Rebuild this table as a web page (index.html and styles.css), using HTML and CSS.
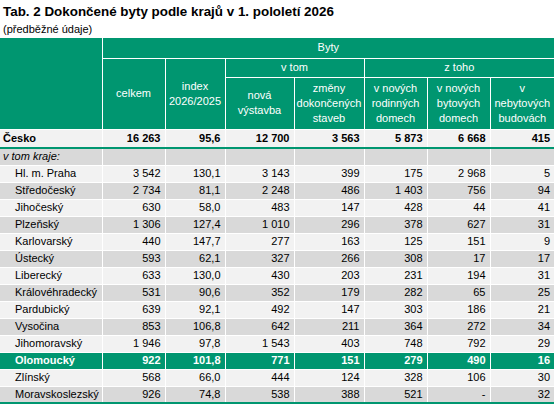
FILE: index.html
```html
<!DOCTYPE html>
<html lang="cs">
<head>
  <meta charset="UTF-8">
  <title>Dokončené byty podle krajů</title>
  <link rel="stylesheet" href="styles.css">
</head>
<body>
  <h1 class="title">Tab. 2 Dokončené byty podle krajů v 1. pololetí 2026</h1>
  <div class="subtitle">(předběžné údaje)</div>

  <table class="data">
    <colgroup>
      <col style="width:102px">
      <col style="width:63px">
      <col style="width:60px">
      <col style="width:69px">
      <col style="width:70px">
      <col style="width:63px">
      <col style="width:63px">
      <col style="width:64px">
    </colgroup>
    <thead>
      <tr class="h1">
        <th rowspan="3"></th>
        <th colspan="7">Byty</th>
      </tr>
      <tr class="h2">
        <th rowspan="2">celkem</th>
        <th rowspan="2">index<br>2026/2025</th>
        <th colspan="2">v tom</th>
        <th colspan="3">z toho</th>
      </tr>
      <tr class="h3">
        <th>nová<br>výstavba</th>
        <th>změny<br>dokončených<br>staveb</th>
        <th>v nových<br>rodinných<br>domech</th>
        <th>v nových<br>bytových<br>domech</th>
        <th>v<br>nebytových<br>budovách</th>
      </tr>
    </thead>
    <tbody>
      <tr class="total">
        <td class="name">Česko</td>
        <td>16 263</td><td>95,6</td><td>12 700</td><td>3 563</td><td>5 873</td><td>6 668</td><td>415</td>
      </tr>
      <tr class="dark">
        <td class="name note">v tom kraje:</td>
        <td></td><td></td><td></td><td></td><td></td><td></td><td></td>
      </tr>
      <tr class="light">
        <td class="name sub">Hl. m. Praha</td>
        <td>3 542</td><td>130,1</td><td>3 143</td><td>399</td><td>175</td><td>2 968</td><td>5</td>
      </tr>
      <tr class="dark">
        <td class="name sub">Středočeský</td>
        <td>2 734</td><td>81,1</td><td>2 248</td><td>486</td><td>1 403</td><td>756</td><td>94</td>
      </tr>
      <tr class="light">
        <td class="name sub">Jihočeský</td>
        <td>630</td><td>58,0</td><td>483</td><td>147</td><td>428</td><td>44</td><td>41</td>
      </tr>
      <tr class="dark">
        <td class="name sub">Plzeňský</td>
        <td>1 306</td><td>127,4</td><td>1 010</td><td>296</td><td>378</td><td>627</td><td>31</td>
      </tr>
      <tr class="light">
        <td class="name sub">Karlovarský</td>
        <td>440</td><td>147,7</td><td>277</td><td>163</td><td>125</td><td>151</td><td>9</td>
      </tr>
      <tr class="dark">
        <td class="name sub">Ústecký</td>
        <td>593</td><td>62,1</td><td>327</td><td>266</td><td>308</td><td>17</td><td>17</td>
      </tr>
      <tr class="light">
        <td class="name sub">Liberecký</td>
        <td>633</td><td>130,0</td><td>430</td><td>203</td><td>231</td><td>194</td><td>31</td>
      </tr>
      <tr class="dark">
        <td class="name sub">Královéhradecký</td>
        <td>531</td><td>90,6</td><td>352</td><td>179</td><td>282</td><td>65</td><td>25</td>
      </tr>
      <tr class="light">
        <td class="name sub">Pardubický</td>
        <td>639</td><td>92,1</td><td>492</td><td>147</td><td>303</td><td>186</td><td>21</td>
      </tr>
      <tr class="dark">
        <td class="name sub">Vysočina</td>
        <td>853</td><td>106,8</td><td>642</td><td>211</td><td>364</td><td>272</td><td>34</td>
      </tr>
      <tr class="light">
        <td class="name sub">Jihomoravský</td>
        <td>1 946</td><td>97,8</td><td>1 543</td><td>403</td><td>748</td><td>792</td><td>29</td>
      </tr>
      <tr class="highlight">
        <td class="name sub">Olomoucký</td>
        <td>922</td><td>101,8</td><td>771</td><td>151</td><td>279</td><td>490</td><td>16</td>
      </tr>
      <tr class="light">
        <td class="name sub">Zlínský</td>
        <td>568</td><td>66,0</td><td>444</td><td>124</td><td>328</td><td>106</td><td>30</td>
      </tr>
      <tr class="dark last">
        <td class="name sub">Moravskoslezský</td>
        <td>926</td><td>74,8</td><td>538</td><td>388</td><td>521</td><td>-</td><td>32</td>
      </tr>
    </tbody>
  </table>
</body>
</html>
```

FILE: styles.css
```css
* {
  box-sizing: border-box;
}

body {
  font-family: "Liberation Sans", Arial, sans-serif;
  background-color: #fff;
  color: #000;
  margin: 0;
  padding: 0;
}

.title {
  margin: 0;
  padding: 3px 0 0 3px;
  font-size: 13.4px;
  line-height: 17px;
  font-weight: bold;
}

.subtitle {
  padding: 2px 0 0 3px;
  font-size: 11px;
  line-height: 14px;
  height: 18px;
}

.data {
  width: 554px;
  table-layout: fixed;
  border-collapse: collapse;
  font-size: 11px;
}

.data th,
.data td {
  border: 1px solid #fff;
  padding: 0 4px;
}

.data tr > :first-child {
  border-left: none;
}

.data tr > :last-child {
  border-right: none;
}

/* Header */
.data th {
  background-color: #009670;
  color: #fff;
  font-weight: normal;
  text-align: center;
  vertical-align: middle;
  line-height: 15px;
  padding: 0 1px;
}

.data thead tr:first-child th {
  border-top: none;
}

.data .h1 th {
  height: 20px;
}

.data .h2 th {
  height: 19px;
}

.data .h3 th {
  height: 52px;
}

/* Body rows */
.data td {
  text-align: right;
  height: 17px;
  line-height: 15px;
  white-space: nowrap;
}

.data td.name {
  text-align: left;
  padding-left: 3px;
}

.data td.sub {
  padding-left: 15px;
}

.data td.note {
  font-style: italic;
}

.data .total td {
  background-color: #f2f2f2;
  font-weight: bold;
  height: 19px;
  border-bottom: 2px solid #009670;
}

.data .light td {
  background-color: #f2f2f2;
}

.data .dark td {
  background-color: #d9d9d9;
}

.data .highlight td {
  background-color: #009670;
  color: #fff;
  font-weight: bold;
}

.data .last td {
  border-bottom: 2px solid #009670;
}
```
